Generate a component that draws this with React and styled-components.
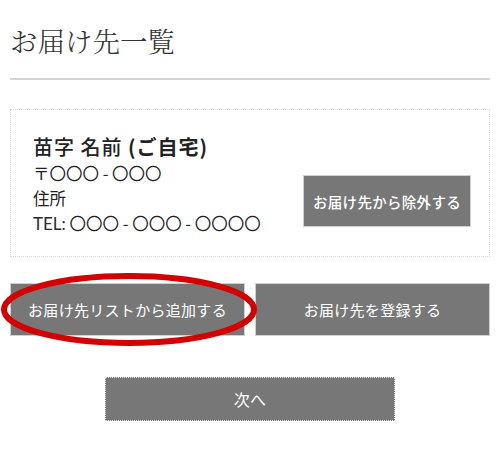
import React from 'react'
import styled, { createGlobalStyle } from 'styled-components'

const GlobalStyle = createGlobalStyle`
  * { box-sizing: border-box; margin: 0; padding: 0; }
  body {
    background: #fff;
    font-family: "Noto Sans CJK JP", "Noto Sans", sans-serif;
    color: #222;
  }
`

const Page = styled.div`
  padding: 0 10px;
  width: 500px;
`

const Header = styled.div`
  padding-top: 20px;
  padding-bottom: 18px;
  border-bottom: 2px solid #d4d4d4;
`

const Title = styled.h1`
  font-family: "Noto Serif CJK JP", "Noto Sans CJK JP", serif;
  font-weight: 300;
  font-size: 27.5px;
  line-height: 40px;
  color: #333;
`

const Card = styled.div`
  margin-top: 29px;
  height: 148px;
  border: 1px dotted #d8d8d8;
  padding: 22px 18px 20px 22px;
  display: flex;
  align-items: flex-end;
  justify-content: space-between;
`

const Info = styled.div`
  display: flex;
  flex-direction: column;
`

const Name = styled.div`
  font-size: 20px;
  font-weight: 500;
  letter-spacing: 1px;
  line-height: 28px;
  color: #222;
`

const Home = styled.span`
  font-weight: 700;
`

const Line = styled.div`
  font-size: 16.5px;
  font-weight: 400;
  line-height: 25px;
  color: #222;
`

const Label = styled.span`
  font-family: Lato, "Noto Sans CJK JP", sans-serif;
  font-size: 17px;
  font-weight: 400;
  color: #2a2a2a;
`

const GrayButton = styled.button`
  font-family: "Noto Sans CJK JP", sans-serif;
  background: #777;
  color: #fff;
  border: 1px ${p => (p.$dotted ? 'dotted' : 'solid')} ${p => (p.$dotted ? '#e2e2e2' : '#d0d0d0')};
  font-size: ${p => p.$size || 15}px;
  font-weight: ${p => p.$weight || 400};
  letter-spacing: 0.3px;
  display: flex;
  align-items: center;
  justify-content: center;
  cursor: pointer;
`

const RemoveButton = styled(GrayButton)`
  width: 168px;
  height: 52px;
  margin-bottom: 9px;
`

const ButtonRow = styled.div`
  position: relative;
  margin-top: 26px;
  display: grid;
  grid-template-columns: 235px 235px;
  gap: 10px;
`

const RowButton = styled(GrayButton)`
  height: 53px;
`

const Circle = styled.svg`
  position: absolute;
  left: -10px;
  top: -11px;
  pointer-events: none;
`

const NextWrap = styled.div`
  margin-top: 41px;
  display: flex;
  justify-content: center;
`

const NextButton = styled(GrayButton)`
  width: 290px;
  height: 44px;
`

export default function App() {
  return (
    <Page>
      <GlobalStyle />
      <Header>
        <Title>お届け先一覧</Title>
      </Header>

      <Card>
        <Info>
          <Name>苗字 名前 <Home>(ご自宅)</Home></Name>
          <Line>〒〇〇〇 - 〇〇〇</Line>
          <Line>住所</Line>
          <Line><Label>TEL:</Label> 〇〇〇 - 〇〇〇 - 〇〇〇〇</Line>
        </Info>
        <RemoveButton $size={14.5} $weight={500}>お届け先から除外する</RemoveButton>
      </Card>

      <ButtonRow>
        <RowButton>お届け先リストから追加する</RowButton>
        <RowButton>お届け先を登録する</RowButton>
        <Circle width="262" height="78" viewBox="0 0 262 78">
          <ellipse cx="129" cy="37.5" rx="125" ry="33.5" fill="none" stroke="#d40000" strokeWidth="6" />
        </Circle>
      </ButtonRow>

      <NextWrap>
        <NextButton $dotted $size={16}>次へ</NextButton>
      </NextWrap>
    </Page>
  )
}
